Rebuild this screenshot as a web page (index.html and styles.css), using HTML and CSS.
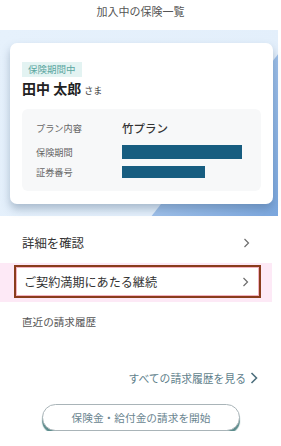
FILE: index.html
```html
<!DOCTYPE html>
<html>
<head>
    <title>加入中の保険一覧</title>
    <link rel="stylesheet" href="styles.css">
</head>
<body>
    <h1 class="page-title">加入中の保険一覧</h1>

    <div class="band">
        <div class="card">
            <span class="badge">保険期間中</span>
            <div class="holder">田中 太郎 <span class="honor">さま</span></div>
            <div class="details">
                <div class="row">
                    <span class="label">プラン内容</span>
                    <span class="plan">竹プラン</span>
                </div>
                <div class="row">
                    <span class="label">保険期間</span>
                    <span class="mask" style="width: 120px; height: 14px"></span>
                </div>
                <div class="row">
                    <span class="label">証券番号</span>
                    <span class="mask" style="width: 83px; height: 12px"></span>
                </div>
            </div>
        </div>
    </div>

    <div class="menu">
        <a class="item">詳細を確認
            <svg class="chev" width="7" height="10" viewBox="0 0 7 10"><polyline points="1.5,1 5.5,5 1.5,9" fill="none" stroke="#6d6d6d" stroke-width="1.2"/></svg>
        </a>
        <div class="focus-wrap">
            <a class="item focus">ご契約満期にあたる継続
                <svg class="chev" width="7" height="10" viewBox="0 0 7 10"><polyline points="1.5,1 5.5,5 1.5,9" fill="none" stroke="#6d6d6d" stroke-width="1.2"/></svg>
            </a>
        </div>
    </div>

    <div class="history">直近の請求履歴</div>

    <div class="more">
        <a>すべての請求履歴を見る</a>
        <svg class="more-chev" width="8" height="12" viewBox="0 0 8 12"><polyline points="1.5,1 6.5,6 1.5,11" fill="none" stroke="#4d6f7d" stroke-width="1.6"/></svg>
    </div>

    <div class="actions">
        <button class="claim">保険金・給付金の請求を開始</button>
    </div>
</body>
</html>
```

FILE: styles.css
```css
body {
    margin: 0;
    width: 281px;
    font-family: "Noto Sans CJK JP", "Noto Sans", sans-serif;
    color: #333;
    background: #fff;
}

.page-title {
    margin: 0;
    height: 30px;
    font-size: 11px;
    line-height: 22px;
    font-weight: normal;
    text-align: center;
    color: #555;
}

.band {
    width: 278px;
    padding: 13px 0 12px;
    background: linear-gradient(128deg, #e6f1fc 0%, #e3effb 70%, #9dbfe9 70.3%, #7ba7de 100%);
}

.card {
    display: flex;
    flex-direction: column;
    align-items: flex-start;
    margin: 0 5px 0 10px;
    padding: 19px 12px 13px;
    background: #fff;
    border-radius: 7px;
    box-shadow: 0 5px 8px rgba(60, 90, 120, 0.35);
}

.badge {
    padding: 0 6px;
    font-size: 9.5px;
    line-height: 15px;
    color: #5aa6a0;
    background: #e3f3f2;
}

.holder {
    display: flex;
    align-items: baseline;
    gap: 3px;
    margin-top: 2px;
    font-size: 14px;
    line-height: 18px;
    font-weight: bold;
    color: #222;
}

.honor {
    font-size: 9px;
    line-height: 10px;
    font-weight: normal;
    color: #444;
}

.details {
    align-self: stretch;
    margin-top: 12px;
    padding: 8px 14px 9px;
    background: #f7f8f9;
    border-radius: 6px;
}

.row {
    display: flex;
    align-items: center;
    height: 20px;
}

.row:first-child {
    height: 22px;
    margin-bottom: 3px;
}

.label {
    width: 86px;
    font-size: 9.2px;
    line-height: 12px;
    color: #666;
}

.plan {
    font-size: 11.5px;
    line-height: 16px;
    font-weight: 500;
    color: #333;
}

.mask {
    display: block;
    background: #175d80;
}

.menu {
    margin-top: 13px;
}

.item {
    display: flex;
    justify-content: space-between;
    align-items: center;
    height: 28px;
    padding: 0 31px 0 22px;
    font-size: 12.4px;
    color: #333;
}

.focus-wrap {
    width: 272px;
    margin-top: 6px;
    padding: 2px 0 4px;
    background: #fde9f6;
}

.item.focus {
    width: 247px;
    height: 33px;
    margin-left: 14px;
    padding: 0 10px 0 8px;
    box-sizing: border-box;
    font-size: 12.1px;
    background: #fff;
    border: 2px solid #8a3c1c;
    box-shadow: inset 0 0 0 1px #f3b3c0;
}

.history {
    margin-top: 12px;
    padding-left: 22px;
    font-size: 10.6px;
    line-height: 16px;
    color: #555;
}

.more {
    display: flex;
    justify-content: flex-end;
    align-items: center;
    margin-top: 40px;
    padding-right: 23px;
    font-size: 10.8px;
    line-height: 16px;
    color: #5f7f8c;
}

.more-chev {
    margin-left: 4px;
}

.actions {
    margin-top: 17px;
    padding-left: 42px;
}

.claim {
    width: 198px;
    height: 27px;
    font-family: inherit;
    font-size: 10.7px;
    color: #6a8590;
    background: #fff;
    border: 1px solid #a9b4b8;
    border-radius: 14px;
    box-shadow: 0 3px 1px #5c8c8c;
}
```
